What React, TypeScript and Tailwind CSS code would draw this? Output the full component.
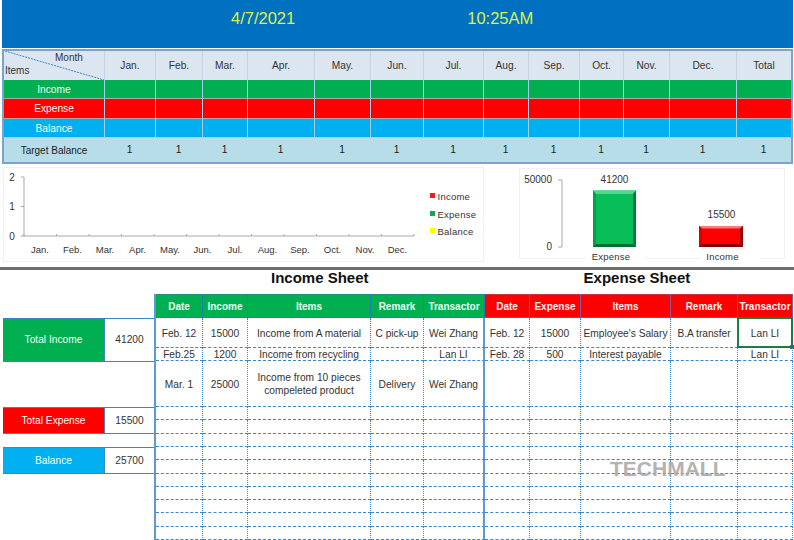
const font = { fontFamily: '"Liberation Sans", Arial, sans-serif' };
const months = ["Jan.", "Feb.", "Mar.", "Apr.", "May.", "Jun.", "Jul.", "Aug.", "Sep.", "Oct.", "Nov.", "Dec.", "Total"];
const topCols = "grid-cols-[100px_51px_47px_45px_67px_56px_53px_60px_45px_51px_44px_46px_67px_55px]";
const sheetCols = "grid-cols-[47px_45px_123px_53px_61px_45px_51px_90px_67px_55px]";

const sheetRows: string[][] = [
  ["Feb. 12", "15000", "Income from A material", "C pick-up", "Wei Zhang", "Feb. 12", "15000", "Employee's Salary", "B.A transfer", "Lan LI"],
  ["Feb.25", "1200", "Income from recycling", "", "Lan LI", "Feb. 28", "500", "Interest payable", "", "Lan LI"],
  ["Mar. 1", "25000", "Income from 10 pieces\ncompeleted product", "Delivery", "Wei Zhang", "", "", "", "", ""],
  ...Array.from({ length: 10 }, () => ["", "", "", "", "", "", "", "", "", ""]),
];
const incomeHead = ["Date", "Income", "Items", "Remark", "Transactor"];
const expenseHead = ["Date", "Expense", "Items", "Remark", "Transactor"];

function TopRow({ label, bg, line }: { label: string; bg: string; line: string }) {
  return (
    <>
      <div className={`${bg} ${line} flex items-center justify-center border-b pt-[1px] text-[10.2px] text-[#f2fff2]`}>{label}</div>
      {months.map((m) => (
        <div key={m} className={`${bg} ${line} border-b border-l border-l-[#9fd0ee]`} />
      ))}
    </>
  );
}

function LeftChart() {
  const ticks = Array.from({ length: 13 }, (_, i) => 24 + i * 32.5);
  return (
    <svg width="481" height="95" viewBox="3 167 481 95" className="block shrink-0" style={font}>
      <rect x="3.5" y="167.5" width="480" height="94" fill="#fff" stroke="#f1f1f1" />
      <path d="M24 177V236M21 177H24M21 206.5H24M21 236H24M24 236H414" stroke="#a8a8a8" fill="none" />
      {ticks.map((x) => (
        <path key={x} d={`M${x} 236V234`} stroke="#a8a8a8" />
      ))}
      {[["2", 177], ["1", 206.5], ["0", 236]].map(([t, y]) => (
        <text key={t} x="12" y={Number(y) + 3.5} fontSize="10" fill="#333" textAnchor="middle">{t}</text>
      ))}
      {months.slice(0, 12).map((m, i) => (
        <text key={m} x={40 + i * 32.5} y="253" fontSize="9.5" fill="#333" textAnchor="middle">{m}</text>
      ))}
      {[["Income", "#ee1c25", 196], ["Expense", "#0fa955", 214], ["Balance", "#ffff00", 231]].map(([t, c, y]) => (
        <g key={String(t)}>
          <rect x="430" y={Number(y) - 3} width="5" height="5" fill={String(c)} />
          <text x="437.5" y={Number(y) + 3.5} fontSize="9.5" fill="#333" letterSpacing="0.25">{t}</text>
        </g>
      ))}
    </svg>
  );
}

function RightChart() {
  return (
    <svg width="277" height="96" viewBox="517 167 277 96" className="block shrink-0" style={font}>
      <rect x="519.5" y="168.5" width="265" height="90" fill="#fff" stroke="#f1f1f1" />
      <rect x="586" y="258" width="60" height="5" fill="#fff" />
      <rect x="700" y="258" width="60" height="5" fill="#fff" />
      <path d="M558 180H562V247H558" stroke="#a8a8a8" fill="none" />
      <text x="552" y="183" fontSize="10" fill="#333" textAnchor="end">50000</text>
      <text x="552" y="250" fontSize="10" fill="#333" textAnchor="end">0</text>
      <rect x="593" y="190.5" width="43" height="56.5" fill="#07bd58" />
      <polygon points="593,190.5 636,190.5 633,194 596,194" fill="#52d88c" />
      <polygon points="593,190.5 596,194 596,244 593,247" fill="#06a04c" />
      <polygon points="636,190.5 633,194 633,244 636,247" fill="#04793a" />
      <polygon points="593,247 596,244 633,244 636,247" fill="#046f35" />
      <rect x="699" y="226" width="44" height="21" fill="#ff0000" />
      <polygon points="699,226 743,226 740,228.5 702,228.5" fill="#ff7b7b" />
      <polygon points="699,226 702,228.5 702,244 699,247" fill="#d80000" />
      <polygon points="743,226 740,228.5 740,244 743,247" fill="#9a0000" />
      <polygon points="699,247 702,244 740,244 743,247" fill="#8c0000" />
      <text x="614.5" y="183" fontSize="10" fill="#333" textAnchor="middle">41200</text>
      <text x="721.5" y="218" fontSize="10" fill="#333" textAnchor="middle">15500</text>
      <text x="611" y="260" fontSize="9.5" fill="#333" textAnchor="middle" letterSpacing="0.2">Expense</text>
      <text x="722.5" y="260" fontSize="9.5" fill="#333" textAnchor="middle" letterSpacing="0.2">Income</text>
    </svg>
  );
}

function Summary({ label, value, bg, h }: { label: string; value: string; bg: string; h: string }) {
  return (
    <div className={`flex ${h} border-y border-[#3f86c4]`}>
      <div className={`${bg} flex w-[101px] items-center justify-center text-[10.2px] text-[#f4fff4]`}>{label}</div>
      <div className="flex w-[50px] items-center justify-center border-l border-[#3f86c4] text-[10.2px] text-[#333]">{value}</div>
    </div>
  );
}

export default function App() {
  return (
    <div className="relative h-[540px] w-[794px] overflow-hidden bg-white" style={font}>
      <div className="ml-[2px] flex h-[48px] w-[791px] items-start bg-[#0070c0] pt-[9px] text-[16.5px] leading-[19px] text-[#dff04a]">
        <span className="ml-[229px]">4/7/2021</span>
        <span className="ml-[172px]">10:25AM</span>
      </div>

      <div className="ml-[2px] mt-[1px] w-[791px] border-2 border-[#7ba3d0]">
        <div className={`grid ${topCols} grid-rows-[29px_19px_20px_19px_24px]`}>
          <div className="relative flex flex-col bg-[#dce6f1] text-[10px] leading-[12px] text-[#333]">
            <svg className="absolute inset-0" width="100" height="29">
              <path d="M1 0L100 29" stroke="#3f86c4" strokeDasharray="2 1" />
            </svg>
            <span className="pl-[51px] pt-[1px]">Month</span>
            <span className="pl-[1px] pt-[1px]">Items</span>
          </div>
          {months.map((m) => (
            <div key={m} className="flex items-center justify-center border-l border-[#c4d3e6] bg-[#dce6f1] text-[10.2px] text-[#333]">{m}</div>
          ))}
          <TopRow label="Income" bg="bg-[#00b050]" line="border-b-[#a9a9a9]" />
          <TopRow label="Expense" bg="bg-[#ff0000]" line="border-b-[#a9a9a9]" />
          <TopRow label="Balance" bg="bg-[#00b0f0]" line="border-b-[#9fd0ee]" />
          <div className="flex items-center justify-center bg-[#b7dde8] text-[10px] text-[#222]">Target Balance</div>
          {months.map((m) => (
            <div key={m} className="flex items-center justify-center bg-[#b7dde8] text-[10.2px] text-[#222]">1</div>
          ))}
        </div>
      </div>

      <div className="ml-[3px] mt-[3px] flex h-[96px] items-start">
        <LeftChart />
        <div className="ml-[33px]">
          <RightChart />
        </div>
      </div>

      <div className="mt-[4px] h-[3px] bg-[#6d6d6d]" />

      <div className="flex h-[24px] items-start text-[15px] font-bold leading-[16px] text-[#111]">
        <span className="ml-[271px]">Income Sheet</span>
        <span className="ml-[215px]">Expense Sheet</span>
      </div>

      <div className="flex">
        <div className="ml-[3px] flex w-[151px] flex-col pt-[24px]">
          <Summary label="Total Income" value="41200" bg="bg-[#00b050]" h="h-[44px]" />
          <div className="h-[45px]" />
          <Summary label="Total Expense" value="15500" bg="bg-[#ff0000]" h="h-[27px]" />
          <div className="h-[13px]" />
          <Summary label="Balance" value="25700" bg="bg-[#00b0f0]" h="h-[27px]" />
        </div>

        <div className={`grid w-[639px] ${sheetCols} grid-rows-[24px_30px_13px_46px_13px_14px_13px_13px_14px_13px_13px_13px_14px_13px] border-l-2 border-[#5b9bd0]`}>
          {incomeHead.map((h) => (
            <div key={h} className="flex items-center justify-center border-y border-r border-y-[#1d8f7a] border-r-[#1f7fa8] bg-[#00b050] text-[10px] font-bold text-[#eafff0]">{h}</div>
          ))}
          {expenseHead.map((h) => (
            <div key={h} className="flex items-center justify-center border-y border-r border-y-[#c23a4a] border-r-[#8a5a9a] bg-[#ff0000] text-[10px] font-bold text-[#fff2f2]">{h}</div>
          ))}
          {sheetRows.map((row, r) =>
            row.map((cell, c) => (
              <div
                key={`${r}-${c}`}
                className={`relative flex items-center justify-center whitespace-pre-line border-b border-dashed border-b-[#3f86c4] pt-[1px] text-center text-[10.2px] leading-[13px] text-[#333] ${
                  c === 4
                    ? "border-r-2 border-r-[#5b9bd0] [border-right-style:solid]!"
                    : "border-r border-r-[#3f86c4] [border-right-style:dotted]!"
                }`}
              >
                {cell}
                {r === 0 && c === 9 && (
                  <span className="absolute -inset-px border-2 border-[#1f7a45]">
                    <span className="absolute -bottom-[3px] -right-[3px] h-[4px] w-[4px] bg-[#1f7a45]" />
                  </span>
                )}
              </div>
            ))
          )}
        </div>
      </div>

      <div className="absolute left-[610px] top-[457px] text-[21px] font-bold leading-[24px] text-[#a9a9a9]/90">TECHMALL</div>
    </div>
  );
}
